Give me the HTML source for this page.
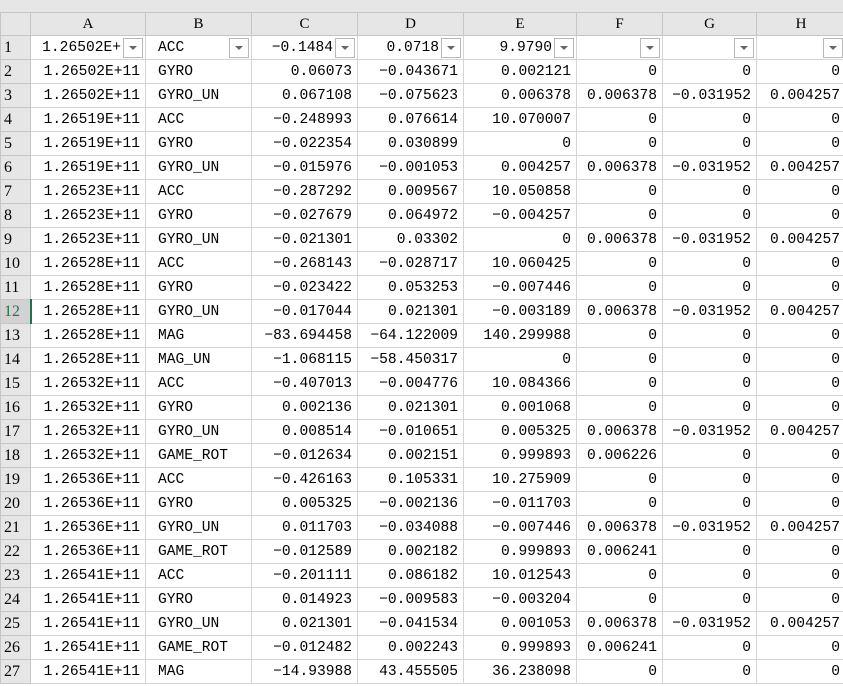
<!DOCTYPE html>
<html><head><meta charset="utf-8"><style>
*{margin:0;padding:0;box-sizing:border-box}
body{width:843px;height:686px;overflow:hidden;background:#fff;font-family:"Liberation Mono","Noto Serif CJK SC",monospace;font-size:14.6px;color:#000;position:relative}
.top{position:absolute;left:0;top:0;width:843px;height:12px;background:#e6e6e6}
table{position:absolute;left:0;top:12px;border-collapse:collapse;table-layout:fixed;width:845px}
td{border:1px solid #d4d4d4;height:24px;white-space:nowrap;overflow:hidden;text-align:right;padding:1px 5px 0 0;line-height:22px;position:relative}
tr.h td{height:23px;background:#e6e6e6;text-align:center;padding:0;border-color:#c6c6c6;font-family:"Liberation Serif",serif;font-size:15px}
td.r{background:#e6e6e6;text-align:left;padding-left:3px;border-color:#c6c6c6;font-family:"Liberation Serif",serif;font-size:16px}
td.sel{background:#d2d2d2;color:#217346;border-right:2px solid #217346}
td.l{text-align:left;padding-left:12px}
.f td{padding-right:24px}
.btn{position:absolute;right:2px;top:2px;width:20px;height:20px;border:1px solid #b8b8b8;background:#fff}
.btn:after{content:"";position:absolute;left:5px;top:7px;border-left:4px solid transparent;border-right:4px solid transparent;border-top:4px solid #666}
</style></head><body>
<div class="top"></div>
<table>
<colgroup><col style="width:30px"><col style="width:115px"><col style="width:106px"><col style="width:106px"><col style="width:106px"><col style="width:113px"><col style="width:86px"><col style="width:94px"><col style="width:89px"></colgroup>
<tr class="h"><td style="background:#e6e6e6"></td><td>A</td><td>B</td><td>C</td><td>D</td><td>E</td><td>F</td><td>G</td><td>H</td></tr>
<tr class="f"><td class="r">1</td><td>1.26502E+<span class="btn"></span></td><td class="l">ACC<span class="btn"></span></td><td>−0.1484<span class="btn"></span></td><td>0.0718<span class="btn"></span></td><td>9.9790<span class="btn"></span></td><td><span class="btn"></span></td><td><span class="btn"></span></td><td><span class="btn"></span></td></tr>
<tr><td class="r">2</td><td>1.26502E+11</td><td class="l">GYRO</td><td>0.06073</td><td>−0.043671</td><td>0.002121</td><td>0</td><td>0</td><td>0</td></tr>
<tr><td class="r">3</td><td>1.26502E+11</td><td class="l">GYRO_UN</td><td>0.067108</td><td>−0.075623</td><td>0.006378</td><td>0.006378</td><td>−0.031952</td><td>0.004257</td></tr>
<tr><td class="r">4</td><td>1.26519E+11</td><td class="l">ACC</td><td>−0.248993</td><td>0.076614</td><td>10.070007</td><td>0</td><td>0</td><td>0</td></tr>
<tr><td class="r">5</td><td>1.26519E+11</td><td class="l">GYRO</td><td>−0.022354</td><td>0.030899</td><td>0</td><td>0</td><td>0</td><td>0</td></tr>
<tr><td class="r">6</td><td>1.26519E+11</td><td class="l">GYRO_UN</td><td>−0.015976</td><td>−0.001053</td><td>0.004257</td><td>0.006378</td><td>−0.031952</td><td>0.004257</td></tr>
<tr><td class="r">7</td><td>1.26523E+11</td><td class="l">ACC</td><td>−0.287292</td><td>0.009567</td><td>10.050858</td><td>0</td><td>0</td><td>0</td></tr>
<tr><td class="r">8</td><td>1.26523E+11</td><td class="l">GYRO</td><td>−0.027679</td><td>0.064972</td><td>−0.004257</td><td>0</td><td>0</td><td>0</td></tr>
<tr><td class="r">9</td><td>1.26523E+11</td><td class="l">GYRO_UN</td><td>−0.021301</td><td>0.03302</td><td>0</td><td>0.006378</td><td>−0.031952</td><td>0.004257</td></tr>
<tr><td class="r">10</td><td>1.26528E+11</td><td class="l">ACC</td><td>−0.268143</td><td>−0.028717</td><td>10.060425</td><td>0</td><td>0</td><td>0</td></tr>
<tr><td class="r">11</td><td>1.26528E+11</td><td class="l">GYRO</td><td>−0.023422</td><td>0.053253</td><td>−0.007446</td><td>0</td><td>0</td><td>0</td></tr>
<tr><td class="r sel">12</td><td>1.26528E+11</td><td class="l">GYRO_UN</td><td>−0.017044</td><td>0.021301</td><td>−0.003189</td><td>0.006378</td><td>−0.031952</td><td>0.004257</td></tr>
<tr><td class="r">13</td><td>1.26528E+11</td><td class="l">MAG</td><td>−83.694458</td><td>−64.122009</td><td>140.299988</td><td>0</td><td>0</td><td>0</td></tr>
<tr><td class="r">14</td><td>1.26528E+11</td><td class="l">MAG_UN</td><td>−1.068115</td><td>−58.450317</td><td>0</td><td>0</td><td>0</td><td>0</td></tr>
<tr><td class="r">15</td><td>1.26532E+11</td><td class="l">ACC</td><td>−0.407013</td><td>−0.004776</td><td>10.084366</td><td>0</td><td>0</td><td>0</td></tr>
<tr><td class="r">16</td><td>1.26532E+11</td><td class="l">GYRO</td><td>0.002136</td><td>0.021301</td><td>0.001068</td><td>0</td><td>0</td><td>0</td></tr>
<tr><td class="r">17</td><td>1.26532E+11</td><td class="l">GYRO_UN</td><td>0.008514</td><td>−0.010651</td><td>0.005325</td><td>0.006378</td><td>−0.031952</td><td>0.004257</td></tr>
<tr><td class="r">18</td><td>1.26532E+11</td><td class="l">GAME_ROT</td><td>−0.012634</td><td>0.002151</td><td>0.999893</td><td>0.006226</td><td>0</td><td>0</td></tr>
<tr><td class="r">19</td><td>1.26536E+11</td><td class="l">ACC</td><td>−0.426163</td><td>0.105331</td><td>10.275909</td><td>0</td><td>0</td><td>0</td></tr>
<tr><td class="r">20</td><td>1.26536E+11</td><td class="l">GYRO</td><td>0.005325</td><td>−0.002136</td><td>−0.011703</td><td>0</td><td>0</td><td>0</td></tr>
<tr><td class="r">21</td><td>1.26536E+11</td><td class="l">GYRO_UN</td><td>0.011703</td><td>−0.034088</td><td>−0.007446</td><td>0.006378</td><td>−0.031952</td><td>0.004257</td></tr>
<tr><td class="r">22</td><td>1.26536E+11</td><td class="l">GAME_ROT</td><td>−0.012589</td><td>0.002182</td><td>0.999893</td><td>0.006241</td><td>0</td><td>0</td></tr>
<tr><td class="r">23</td><td>1.26541E+11</td><td class="l">ACC</td><td>−0.201111</td><td>0.086182</td><td>10.012543</td><td>0</td><td>0</td><td>0</td></tr>
<tr><td class="r">24</td><td>1.26541E+11</td><td class="l">GYRO</td><td>0.014923</td><td>−0.009583</td><td>−0.003204</td><td>0</td><td>0</td><td>0</td></tr>
<tr><td class="r">25</td><td>1.26541E+11</td><td class="l">GYRO_UN</td><td>0.021301</td><td>−0.041534</td><td>0.001053</td><td>0.006378</td><td>−0.031952</td><td>0.004257</td></tr>
<tr><td class="r">26</td><td>1.26541E+11</td><td class="l">GAME_ROT</td><td>−0.012482</td><td>0.002243</td><td>0.999893</td><td>0.006241</td><td>0</td><td>0</td></tr>
<tr><td class="r">27</td><td>1.26541E+11</td><td class="l">MAG</td><td>−14.93988</td><td>43.455505</td><td>36.238098</td><td>0</td><td>0</td><td>0</td></tr>
</table>
</body></html>
